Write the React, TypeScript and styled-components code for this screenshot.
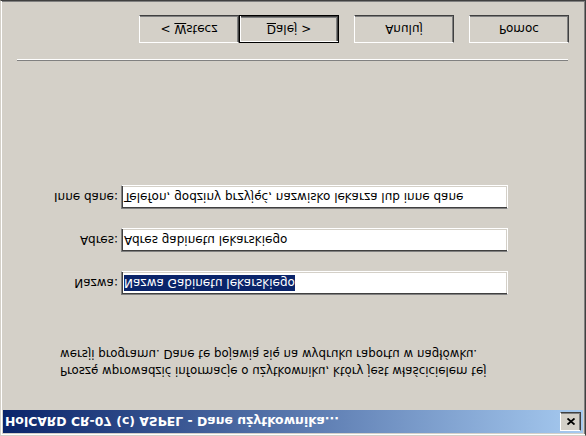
import React from 'react';
import styled, { createGlobalStyle } from 'styled-components';

const GlobalStyle = createGlobalStyle`
  html, body {
    margin: 0;
    padding: 0;
    background: #d4d0c8;
  }
  body {
    width: 586px;
    height: 436px;
    overflow: hidden;
  }
`;

const fields = [
  { label: 'Nazwa:', value: 'Nazwa Gabinetu lekarskiego', selected: true },
  { label: 'Adres:', value: 'Adres gabinetu lekarskiego', selected: false },
  { label: 'Inne dane:', value: 'Telefon, godziny przyjęć, nazwisko lekarza lub inne dane', selected: false },
];

export default function App() {
  return (
    <>
      <GlobalStyle />
      {/* the whole dialog is mirrored top-to-bottom in the screenshot */}
      <Window>
        <TitleBar>
          <Title>HolCARD CR-07 (c) ASPEL - Dane użytkownika...</Title>
          <CloseButton aria-label="Zamknij">
            <svg width="8" height="7" viewBox="0 0 8 7">
              <path d="M0.5 0.5 L7.5 6.5 M7.5 0.5 L0.5 6.5" stroke="#000" strokeWidth="1.8" />
            </svg>
          </CloseButton>
        </TitleBar>

        <Intro>
          Proszę wprowadzić informacje o użytkowniku, który jest właścicielem tej
          <br />
          wersji programu. Dane te pojawią się na wydruku raportu w nagłówku.
        </Intro>

        <Form>
          {fields.map((field) => (
            <React.Fragment key={field.label}>
              <Label>{field.label}</Label>
              <Field>{field.selected ? <Selected>{field.value}</Selected> : field.value}</Field>
            </React.Fragment>
          ))}
        </Form>

        <Footer>
          <Separator />
          <ButtonRow>
            <ButtonGroup>
              <Button>
                &lt; <Key>W</Key>stecz
              </Button>
              <Button $default>
                <Key>D</Key>alej &gt;
              </Button>
            </ButtonGroup>
            <Button>Anuluj</Button>
            <Button>Pomoc</Button>
          </ButtonRow>
        </Footer>
      </Window>
    </>
  );
}

const Window = styled.div`
  box-sizing: border-box;
  width: 586px;
  height: 436px;
  display: flex;
  flex-direction: column;
  padding: 2px;
  background: #d4d0c8;
  border: 1px solid;
  border-color: #d4d0c8 #404040 #404040 #d4d0c8;
  box-shadow: inset 1px 1px #ffffff, inset -1px -1px #808080;
  transform: scaleY(-1);
  font-family: 'DejaVu Sans', 'Liberation Sans', sans-serif;
  font-size: 12px;
  color: #000;
`;

const TitleBar = styled.div`
  height: 23px;
  flex-shrink: 0;
  display: flex;
  align-items: center;
  justify-content: space-between;
  padding: 0 2px;
  background: linear-gradient(to right, #0a246a, #a6caf0);
`;

const Title = styled.span`
  color: #fff;
  font-weight: bold;
  font-size: 12.4px;
  white-space: nowrap;
`;

const CloseButton = styled.div`
  box-sizing: border-box;
  width: 21px;
  height: 19px;
  display: flex;
  align-items: center;
  justify-content: center;
  background: #d4d0c8;
  border: 1px solid;
  border-color: #ffffff #404040 #404040 #ffffff;
  box-shadow: inset -1px -1px #808080;
`;

const Intro = styled.p`
  margin: 31px 0 0 57px;
  font-size: 11.8px;
  line-height: 17px;
  white-space: nowrap;
`;

const Form = styled.div`
  display: grid;
  grid-template-columns: 115px 387px;
  grid-auto-rows: 24px;
  column-gap: 3px;
  row-gap: 19px;
  margin-top: 50px;
`;

const Label = styled.span`
  align-self: center;
  text-align: right;
`;

const Field = styled.div`
  box-sizing: border-box;
  display: flex;
  align-items: center;
  padding: 0 2px;
  background: #fff;
  border: 1px solid;
  border-color: #808080 #ffffff #ffffff #808080;
  box-shadow: inset 1px 1px #404040, inset -1px -1px #d4d0c8;
  white-space: nowrap;
  overflow: hidden;
`;

const Selected = styled.span`
  background: #0a246a;
  color: #fff;
  line-height: 16px;
`;

const Footer = styled.div`
  margin-top: auto;
  padding-bottom: 12px;
`;

const Separator = styled.div`
  margin: 0 15px 0 14px;
  border-top: 1px solid #808080;
  border-bottom: 1px solid #ffffff;
`;

const ButtonRow = styled.div`
  display: flex;
  justify-content: flex-end;
  gap: 15px;
  margin-top: 16px;
  padding-right: 14px;
`;

const ButtonGroup = styled.div`
  display: flex;
`;

const Button = styled.div<{ $default?: boolean }>`
  box-sizing: border-box;
  width: 100px;
  height: 28px;
  display: flex;
  align-items: center;
  justify-content: center;
  white-space: pre;
  background: #d4d0c8;
  border: 1px solid;
  border-color: ${(p) => (p.$default ? '#000000' : '#ffffff #404040 #404040 #ffffff')};
  box-shadow: ${(p) =>
    p.$default
      ? 'inset 1px 1px #ffffff, inset -1px -1px #404040, inset -2px -2px #808080'
      : 'inset -1px -1px #808080'};
`;

const Key = styled.span`
  text-decoration: underline;
`;
